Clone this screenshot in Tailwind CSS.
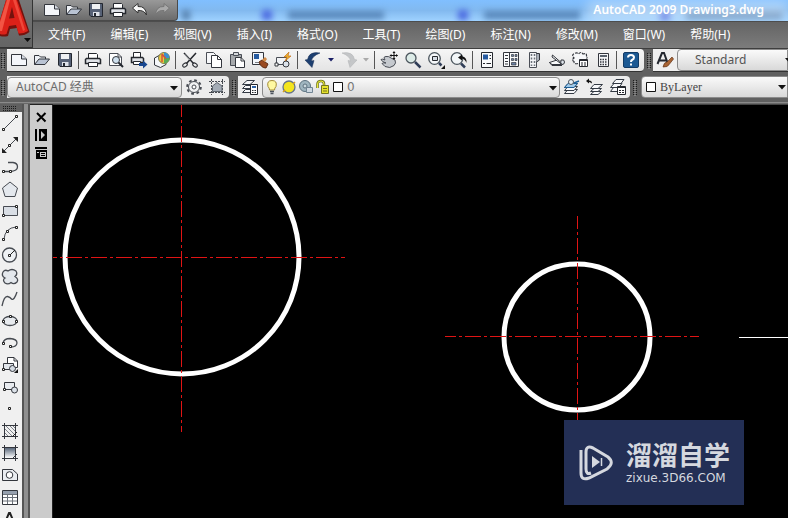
<!DOCTYPE html>
<html lang="zh-CN">
  <head>
    <meta charset="UTF-8" />
    <meta name="viewport" content="width=device-width, initial-scale=1.0" />
    <title>AutoCAD 2009 Drawing3.dwg</title>
    <script src="https://cdn.jsdelivr.net/npm/@tailwindcss/browser@4"></script>
  </head>
  <body class="flex h-screen flex-col overflow-hidden bg-[#686868] font-['Noto_Sans','Noto_Sans_CJK_SC',sans-serif] text-xs">
    <!-- Shared icons -->
    <svg class="hidden">
      <symbol id="i-new" viewBox="0 0 18 18">
        <path d="M1.500 3.500H11.500L16.500 8V14.500H1.500Z" fill="#f4f6fa" stroke="#33363d" />
        <path d="M11.500 3.500V8H16.500" fill="#d5dae2" stroke="#33363d" />
      </symbol>
      <symbol id="i-open" viewBox="0 0 18 18">
        <path d="M1.500 13.500V4.500H6L7.500 6H12.500V8" fill="#eef1f6" stroke="#33363d" />
        <path d="M1.500 13.500L6 8H16.500L12 13.500Z" fill="#b9c3d3" stroke="#33363d" />
      </symbol>
      <symbol id="i-save" viewBox="0 0 18 18">
        <path d="M2.500 2.500H15.500V15.500H4L2.500 14Z" fill="#566176" stroke="#23272f" />
        <path d="M5 3H13V8H5Z" fill="#eef0f3" />
        <path d="M6 11H12.500V15H6Z" fill="#dde1e8" />
        <path d="M7 12H9V15H7Z" fill="#23272f" />
      </symbol>
      <symbol id="i-print" viewBox="0 0 18 18">
        <path d="M4.500 7V2.500H12.500L13.500 3.500V7" fill="#fff" stroke="#25282e" />
        <path d="M2.500 7.500H15.500L16.500 8.500V12.500H1.500V8.500Z" fill="#dfe2e7" stroke="#25282e" stroke-width="1.500" />
        <path d="M4.500 11.500H13.500V15.500H4.500Z" fill="#fff" stroke="#25282e" />
      </symbol>
      <symbol id="i-layers" viewBox="0 0 18 18">
        <g fill="#f7f8fa" stroke="#333a44">
          <path d="M1.500 15.500L5 11.500H14.500L11 15.500Z" />
          <path d="M1.500 12.500L5 8.500H14.500L11 12.500Z" />
          <path d="M1.500 9.500L5 5.500H14.500L11 9.500Z" />
        </g>
      </symbol>
      <symbol id="i-grip" viewBox="0 0 4 16">
        <path d="M.5 0V16M3.500 0V16" stroke="#1d1d1d" stroke-dasharray="1 1" />
        <path d="M2 1V16" stroke="#aaa" stroke-dasharray="1 1" />
      </symbol>
      <symbol id="i-down" viewBox="0 0 10 6"><path d="M0 0H10L5 5.500Z" fill="#111" /></symbol>
    </svg>

    <header class="flex shrink-0">
      <button aria-label="AutoCAD" class="h-12 w-[33px] shrink-0 border-r border-b border-[#343434] bg-gradient-to-b from-[#777] to-[#646464]">
        <svg class="h-[47px] w-8" viewBox="0 0 32 47">
          <path d="M6 0H19L29.500 32Q24 36 19 35.500L17 28L10 29L8 36Q4 37 0 36V20Z" fill="#74120d" />
          <path fill-rule="evenodd" d="M6 0H17L28 31Q23 34 18.500 33.500L16 25L9 26L6.500 34Q3 35 0 34V20ZM12 7L9 18.500L14.500 18Z" fill="#dc2119" />
          <path d="M7 0H10L2 31L0 31V22Z" fill="#f35444" />
          <path d="M13 0H16L25 30L23 31Z" fill="#f0483a" />
          <path d="M24 38H31L27.500 42Z" fill="#0b0b0b" />
        </svg>
      </button>
      <div class="min-w-0 flex-1">
        <!-- Title bar -->
        <div class="flex h-[21px] bg-gradient-to-b from-[#80bfff] via-[#82b9ef] to-[#9fd2ff]">
          <div class="flex w-[145px] shrink-0 items-center gap-1 rounded-br border-r border-b border-[#4a4a4a] bg-gradient-to-b from-[#999] to-[#6b6b6b] pl-2.5">
            <button aria-label="新建"><svg class="size-[18px]"><use href="#i-new" /></svg></button>
            <button aria-label="打开"><svg class="size-[18px]"><use href="#i-open" /></svg></button>
            <button aria-label="保存"><svg class="size-[18px]"><use href="#i-save" /></svg></button>
            <button aria-label="打印"><svg class="size-[18px]"><use href="#i-print" /></svg></button>
            <button aria-label="放弃">
              <svg class="size-[18px]" viewBox="0 0 18 18"><path d="M1.500 7L7 2.500V5.500Q15 5 15.500 14Q13 9 7 9.500V12Z" fill="#f7f7f7" stroke="#333" /></svg>
            </button>
            <button aria-label="重做">
              <svg class="size-[18px]" viewBox="0 0 18 18"><path d="M16.500 7L11 2.500V5.500Q3 5 2.500 14Q5 9 11 9.500V12Z" fill="#a9a9a9" stroke="#777" /></svg>
            </button>
          </div>
          <!-- Blurred windows behind the glass frame -->
          <div class="relative min-w-0 flex-1 overflow-hidden">
            <div class="absolute inset-0 flex items-center blur-[3px]" aria-hidden="true">
              <span class="mt-2 ml-1 h-2.5 w-2 bg-[#557fac]"></span>
              <span class="mt-2 ml-[72px] h-2.5 w-2.5 bg-[#4a68e0]"></span>
              <span class="mt-2 ml-4 h-2 w-24 bg-[#5685b8]"></span>
              <span class="mt-2 ml-[74px] h-2.5 w-2.5 bg-[#4a68e0]"></span>
              <span class="mt-2 ml-4 h-2 w-24 bg-[#5685b8]"></span>
              <span class="mt-2 ml-20 h-2.5 w-2.5 bg-[#4a68e0]"></span>
              <span class="mt-2 ml-4 h-2 w-24 bg-[#5685b8]"></span>
            </div>
            <div class="absolute inset-y-0 right-0 w-[200px] bg-white/35 blur-[6px]"></div>
            <h1 class="relative pr-6 text-right text-xs/5 font-semibold whitespace-nowrap text-white">AutoCAD 2009 Drawing3.dwg</h1>
          </div>
        </div>
        <!-- Menu bar -->
        <nav class="flex h-[27px] items-center gap-[25px] border-t border-[#4d4d4d] bg-gradient-to-b from-[#646464] to-[#7c7c7c] pl-[15px] whitespace-nowrap text-white">
          <button>文件(F)</button>
          <button>编辑(E)</button>
          <button>视图(V)</button>
          <button>插入(I)</button>
          <button>格式(O)</button>
          <button>工具(T)</button>
          <button>绘图(D)</button>
          <button>标注(N)</button>
          <button>修改(M)</button>
          <button>窗口(W)</button>
          <button>帮助(H)</button>
        </nav>
      </div>
    </header>

    <!-- Standard toolbar -->
    <div class="flex h-[27px] shrink-0 items-start border-t border-[#3e3e3e] bg-[#606060]">
      <svg class="mt-1 ml-px h-4 w-1 shrink-0"><use href="#i-grip" /></svg>
      <div class="ml-0.5 flex h-[23px] w-[637px] shrink-0 items-center rounded-r-sm border-b border-[#333] bg-gradient-to-b from-[#f6f6f6] to-[#e4e4e4]">
        <button aria-label="新建" class="grid w-[23px] place-items-center"><svg class="size-[18px]"><use href="#i-new" /></svg></button>
        <button aria-label="打开" class="grid w-[23px] place-items-center"><svg class="size-[18px]"><use href="#i-open" /></svg></button>
        <button aria-label="保存" class="grid w-[23px] place-items-center"><svg class="size-[18px]"><use href="#i-save" /></svg></button>
        <span class="mx-0.5 h-[18px] w-px bg-[#555]"></span>
        <button aria-label="打印" class="grid w-[23px] place-items-center"><svg class="size-[18px]"><use href="#i-print" /></svg></button>
        <button aria-label="打印预览" class="grid w-[23px] place-items-center">
          <svg class="size-[18px]" viewBox="0 0 18 18">
            <path d="M2.500 14.500V2.500H11L14.500 6V14.500Z" fill="#fff" stroke="#4b4f57" />
            <path d="M11 2.500V6H14.500" fill="none" stroke="#4b4f57" />
            <circle cx="9" cy="9" r="3.500" fill="#cfe0ee" stroke="#33363d" />
            <path d="M11.500 11.500L16 16" stroke="#23272f" stroke-width="2" />
          </svg>
        </button>
        <button aria-label="发布" class="grid w-[23px] place-items-center">
          <svg class="size-[18px]" viewBox="0 0 18 18">
            <path d="M3.500 6V1.500H10.500V6" fill="#fff" stroke="#25282e" />
            <path d="M1.500 6.500H12.500L13.500 7.500V11.500H1.500Z" fill="#dfe2e7" stroke="#25282e" stroke-width="1.500" />
            <path d="M3.500 10.500H10.500V13.500H3.500Z" fill="#fff" stroke="#25282e" />
            <path d="M9 12H13V9.500L17.500 13.500L13 17.500V15H9Z" fill="#17468f" />
          </svg>
        </button>
        <button aria-label="3DDWF" class="grid w-[23px] place-items-center">
          <svg class="size-[18px]" viewBox="0 0 18 18">
            <path d="M1.500 7L7 4L13 6.500V13.500L7.500 16.500L1.500 14Z" fill="#f5f7fa" stroke="#33363d" />
            <circle cx="11" cy="7" r="5.500" fill="#e7c93b" stroke="#7d7a52" />
            <path d="M11 1.500A5.500 5.500 0 0 1 16.500 7H11Z" fill="#3b91ce" />
            <path d="M11 7H16.500A5.500 5.500 0 0 1 11 12.500Z" fill="#5aaa57" />
            <path d="M9 3V11M9 3L13 8" stroke="#d3553b" stroke-width="1.500" />
          </svg>
        </button>
        <span class="mx-0.5 h-[18px] w-px bg-[#555]"></span>
        <button aria-label="剪切" class="grid w-6 place-items-center">
          <svg class="size-[18px]" viewBox="0 0 18 18">
            <path d="M3 2L12.500 12.500M15 2L5.500 12.500" stroke="#25282e" stroke-width="1.500" />
            <path d="M3.500 3L9 9" stroke="#fff" stroke-width=".5" />
            <ellipse cx="4" cy="14" rx="2.500" ry="1.700" transform="rotate(-35 4 14)" fill="none" stroke="#25282e" />
            <ellipse cx="14" cy="14" rx="2.500" ry="1.700" transform="rotate(35 14 14)" fill="none" stroke="#25282e" />
          </svg>
        </button>
        <button aria-label="复制" class="grid w-[23px] place-items-center">
          <svg class="size-[18px]" viewBox="0 0 18 18">
            <path d="M1.500 1.500H8.500L10.500 3.500V12.500H1.500Z" fill="#f7f8fa" stroke="#4a4e56" />
            <path d="M6.500 4.500H12.500L16.500 8.500V16.500H6.500Z" fill="#fff" stroke="#33363d" />
            <path d="M12.500 4.500V8.500H16.500" fill="none" stroke="#33363d" />
          </svg>
        </button>
        <button aria-label="粘贴" class="grid w-[23px] place-items-center">
          <svg class="size-[18px]" viewBox="0 0 18 18">
            <path d="M2.500 3.500H13.500V14.500H2.500Z" fill="#a6a9ac" stroke="#4a4e56" />
            <path d="M5.500 1.500H10.500V4.500H5.500Z" fill="#d6d9dc" stroke="#4a4e56" />
            <path d="M7.500 6.500H13L16.500 10V16.500H7.500Z" fill="#fff" stroke="#33363d" />
            <path d="M13 6.500V10H16.500" fill="none" stroke="#33363d" />
          </svg>
        </button>
        <button aria-label="特性匹配" class="grid w-[23px] place-items-center">
          <svg class="size-[18px]" viewBox="0 0 18 18">
            <path d="M1.500 1.500H12.500V13.500H1.500Z" fill="#f3f6fa" stroke="#33363d" />
            <path d="M3 3H8V8H3Z" fill="#255aa0" />
            <path d="M4 11.500H8" stroke="#7a8087" />
            <path d="M8 11L11 9L17 13L15 17Q10 17 8 11Z" fill="#9a4a20" stroke="#5d2c14" />
            <path d="M11 9L14 6L16 8L14 11Z" fill="#d28c4a" />
          </svg>
        </button>
        <button aria-label="块编辑器" class="grid w-[23px] place-items-center">
          <svg class="size-[18px]" viewBox="0 0 18 18">
            <path d="M2.500 6.500H12.500V13.500H2.500Z" fill="#f2f4f7" stroke="#4a4e56" />
            <path d="M1 12H4V15H1Z" fill="#fff" stroke="#33363d" />
            <circle cx="12" cy="13" r="3" fill="#dbe2ea" stroke="#33363d" />
            <path d="M15 1L10 6L13 6L11 10L17 5L14 5Z" fill="#efb32b" stroke="#c1701c" stroke-width=".7" />
          </svg>
        </button>
        <span class="mx-[3px] h-[18px] w-px bg-[#555]"></span>
        <button aria-label="放弃" class="grid w-[23px] place-items-center">
          <svg class="size-[18px]" viewBox="0 0 18 18"><path d="M1 9L8 16.500L10 9.500L7.500 10Q8 5 16 2Q5 0 3.500 8.500Z" fill="#1d3f70" stroke="#142b50" stroke-width=".5" /></svg>
        </button>
        <button aria-label="放弃列表" class="grid w-[13px] place-items-center"><svg class="h-1 w-1.5" viewBox="0 0 6 4"><path d="M0 0H6L3 3.500Z" fill="#1a1f66" /></svg></button>
        <button aria-label="重做" class="grid w-[23px] place-items-center">
          <svg class="size-[18px]" viewBox="0 0 18 18"><path d="M17 9L10 16.500L8 9.500L10.500 10Q10 5 2 2Q13 0 14.500 8.500Z" fill="#c4c6c8" stroke="#afb1b3" stroke-width=".5" /></svg>
        </button>
        <button aria-label="重做列表" class="grid w-3 place-items-center"><svg class="h-1 w-1.5" viewBox="0 0 6 4"><path d="M0 0H6L3 3.500Z" fill="#aaa" /></svg></button>
        <span class="mx-0.5 h-[18px] w-px bg-[#555]"></span>
        <button aria-label="实时平移" class="grid w-6 place-items-center">
          <svg class="size-[18px]" viewBox="0 0 18 18">
            <path d="M1 8.500Q2 7.500 5 9L4 7Q4 5.500 6 5.500Q9 5 11 7L15 9Q16.500 12 14 14.500Q10 18 5 15.500L2 12.500Q3 11.500 6 12Q2 11 1 8.500Z" fill="#c5c9ce" stroke="#4a4e56" />
            <path d="M14 1V8M10.500 4.500H17.500" stroke="#111" />
            <path d="M14 0L12.500 2H15.500ZM14 9L12.500 7H15.500ZM9.500 4.500L11.500 3V6ZM18 4.500L16 3V6Z" fill="#111" />
          </svg>
        </button>
        <button aria-label="实时缩放" class="grid w-[23px] place-items-center">
          <svg class="size-[18px]" viewBox="0 0 18 18">
            <circle cx="7" cy="7" r="5" fill="#dcebe7" stroke="#4c565e" stroke-width="1.300" />
            <path d="M11 11L16.500 16.500" stroke="#2f3d57" stroke-width="2.500" />
          </svg>
        </button>
        <button aria-label="窗口缩放" class="grid w-[23px] place-items-center">
          <svg class="size-[18px]" viewBox="0 0 18 18">
            <circle cx="7.500" cy="7.500" r="5.800" fill="#f5f8fa" stroke="#4c565e" stroke-width="1.300" />
            <path d="M5.500 5.500H10.500V9.500H5.500Z" fill="#d6dde5" stroke="#25282e" />
            <path d="M12 12L14.500 14.500" stroke="#2f3d57" stroke-width="2.500" />
            <path d="M18 14V18H14Z" fill="#111" />
          </svg>
        </button>
        <button aria-label="缩放上一个" class="grid w-[23px] place-items-center">
          <svg class="size-[18px]" viewBox="0 0 18 18">
            <circle cx="7" cy="7.500" r="5.800" fill="#f2f6f8" stroke="#4c565e" stroke-width="1.300" />
            <path d="M11 12.500L15 16.500" stroke="#2f3d57" stroke-width="2.500" />
            <path d="M8 6.500L12 3.500V5.500Q17 6 16.500 12Q15 8 12 7.500V9.500Z" fill="#111" />
          </svg>
        </button>
        <span class="mx-0.5 h-[18px] w-px bg-[#555]"></span>
        <button aria-label="特性" class="grid w-6 place-items-center">
          <svg class="size-[18px]" viewBox="0 0 18 18">
            <path d="M3.500 1.500H14.500V16.500H3.500Z" fill="#fafbfc" stroke="#25282e" />
            <path d="M5 3.500H10V8.500H5Z" fill="#255aa0" />
            <path d="M11.500 4.500H13M11.500 7.500H13M5 12.500H7M8.500 12.500H13" stroke="#25282e" />
          </svg>
        </button>
        <button aria-label="设计中心" class="grid w-[23px] place-items-center">
          <svg class="size-[18px]" viewBox="0 0 18 18">
            <path d="M1.500 1.500H16.500V15.500H1.500ZM7.500 1.500V15.500" fill="#fafbfc" stroke="#33363d" />
            <path d="M3 4.500H6M3 7.500H6M3 10.500H6M3 13H6" stroke="#33363d" />
            <path d="M9.500 3.500H11.500V5.500H9.500ZM13 3.500H15V5.500H13ZM9.500 7.500H11.500V9.500H9.500ZM13 7.500H15V9.500H13ZM9.500 11.500H14V14H9.500Z" fill="#6c83a5" stroke="#33363d" stroke-width=".7" />
          </svg>
        </button>
        <button aria-label="工具选项板" class="grid w-[23px] place-items-center">
          <svg class="size-[18px]" viewBox="0 0 18 18">
            <path d="M4.500 1.500H11.500V16.500H4.500Z" fill="#f5f6f8" stroke="#4a4e56" />
            <path d="M11.500 2.500H14.500V9L11.500 11" fill="#a9afb8" stroke="#33363d" />
            <path d="M6.500 3V15M9.500 3V15" stroke="#6c727a" stroke-width="1.500" stroke-dasharray="2 1.500" />
          </svg>
        </button>
        <button aria-label="图纸集管理器" class="grid w-[23px] place-items-center">
          <svg class="size-[18px]" viewBox="0 0 18 18">
            <path d="M1.500 11.500L9 9L14 13.500H4Z" fill="#f7f8fa" stroke="#33363d" />
            <path d="M4.500 4L13 11.500L14 13.500L4 6Z" fill="#f7f8fa" stroke="#33363d" />
            <path d="M13 9Q16.500 8 16.500 11Q16.500 13.500 14 13.500Q12 12.500 13 9Z" fill="#dfe5ec" stroke="#33363d" />
            <path d="M1.500 11.500L4 14.500H14" fill="none" stroke="#33363d" />
          </svg>
        </button>
        <button aria-label="标记集管理器" class="grid w-[23px] place-items-center">
          <svg class="size-[18px]" viewBox="0 0 18 18">
            <path d="M7 12.500Q3 13.500 3 10.500Q0 9 3 7Q0 4 3.500 2.500Q6 1 7.500 3Q10 0 12 3Q16 1.500 15.500 5Q17 6 15.500 7.500" fill="#f7f8fa" stroke="#33363d" stroke-width="1.200" stroke-dasharray="3 1" />
            <path d="M8.500 8.500H16.500V15.500H8.500Z" fill="#fff" stroke="#25282e" />
            <path d="M8.500 9.500H16.500M10 12H12M13 12H15M10 14H12M13 14H15" stroke="#25282e" />
          </svg>
        </button>
        <button aria-label="快速计算器" class="grid w-[23px] place-items-center">
          <svg class="size-[18px]" viewBox="0 0 18 18">
            <path d="M4.500 2.500H14.500V15.500H4.500Z" fill="#f5f6f8" stroke="#33363d" />
            <path d="M6 5H13" stroke="#59616c" stroke-width="2" />
            <path d="M6 8.500H13M6 11H13M6 13.500H13" stroke="#33363d" stroke-width="1.500" stroke-dasharray="1.500 1" />
          </svg>
        </button>
        <span class="mx-0.5 h-[18px] w-px bg-[#555]"></span>
        <button aria-label="帮助" class="grid w-6 place-items-center">
          <svg class="size-4" viewBox="0 0 16 16">
            <rect x=".5" y=".5" width="15" height="15" rx="1.500" fill="#1c5993" stroke="#123b66" />
            <path d="M5 5.500Q5 3 8 3Q11 3 11 5.500Q11 7 9 8Q8 8.500 8 10" fill="none" stroke="#fff" stroke-width="2" />
            <path d="M7 11.500H9V13.500H7Z" fill="#fff" />
          </svg>
        </button>
      </div>
      <svg class="mt-1 ml-[3px] h-4 w-1 shrink-0"><use href="#i-grip" /></svg>
      <div class="ml-0.5 flex h-[23px] min-w-0 flex-1 items-center border-b border-[#333] bg-[#efefef]">
        <button aria-label="文字样式" class="grid w-6 shrink-0 place-items-center">
          <svg class="size-[18px]" viewBox="0 0 18 18">
            <path d="M1.500 13L6 2H8L12 13M3.500 9.500H10" fill="none" stroke="#23272f" stroke-width="2" />
            <path d="M7 16Q8 11 11 11L16 6L17.500 8L13.500 13Q12 16.500 7 16Z" fill="#a86434" stroke="#63351a" stroke-width=".7" />
          </svg>
        </button>
        <div class="relative h-[22px] min-w-0 flex-1 rounded-l-sm border border-[#8b8b8b] bg-gradient-to-b from-[#fafafa] to-[#d9d9d9]">
          <select aria-label="文字样式" class="size-full appearance-none pl-[17px] text-xs text-[#555]"><option>Standard</option></select>
          <svg class="pointer-events-none absolute top-2 -right-1.5 h-[5px] w-2"><use href="#i-down" /></svg>
        </div>
      </div>
    </div>

    <!-- Workspace and layer toolbars -->
    <div class="flex h-7 shrink-0 items-start border-b border-[#8a8a8a] bg-[#606060] pt-px">
      <svg class="mt-1 ml-px h-4 w-1 shrink-0"><use href="#i-grip" /></svg>
      <div class="ml-0.5 flex h-[22px] w-[222px] shrink-0 items-center rounded-r-sm bg-[#ececec]">
        <div class="relative h-[21px] w-[175px] rounded-sm border border-[#8b8b8b] bg-gradient-to-b from-[#fafafa] to-[#d9d9d9]">
          <select aria-label="工作空间" class="size-full appearance-none pl-2 text-xs text-[#6c6c6c]"><option>AutoCAD 经典</option></select>
          <svg class="pointer-events-none absolute top-2 right-[3px] h-[5px] w-2"><use href="#i-down" /></svg>
        </div>
        <button aria-label="工作空间设置" class="grid w-[23px] place-items-center">
          <svg class="size-[18px]" viewBox="0 0 18 18">
            <circle cx="9" cy="9" r="6.800" fill="none" stroke="#474b52" stroke-width="2" stroke-dasharray="2.700 2.640" />
            <circle cx="9" cy="9" r="5.500" fill="#f0f1f2" stroke="#474b52" />
            <circle cx="9" cy="9" r="2" fill="#fff" stroke="#474b52" />
          </svg>
        </button>
        <button aria-label="我的工作空间" class="grid w-[23px] place-items-center">
          <svg class="size-[18px]" viewBox="0 0 18 18">
            <path d="M3.500 1V17M14.500 1V17M1 3.500H17M1 14.500H17" stroke="#474b52" stroke-dasharray="2 1" />
            <path d="M4.500 13.500V8L9 4.500L14 8V13.500Z" fill="#a4acb6" stroke="#5f666f" />
          </svg>
        </button>
      </div>
      <svg class="mt-1 ml-[3px] h-4 w-1 shrink-0"><use href="#i-grip" /></svg>
      <div class="ml-0.5 flex h-[22px] w-[392px] shrink-0 items-center rounded-r-sm bg-[#ececec]">
        <button aria-label="图层特性" class="grid w-6 shrink-0 place-items-center">
          <svg class="size-[18px]" viewBox="0 0 18 18">
            <g fill="#f7f8fa" stroke="#333a44">
              <path d="M1.500 14.500L4.500 11.500H11V14.500Z" />
              <path d="M1.500 10.500L4.500 7.500H12L9 10.500Z" />
              <path d="M1.500 6.500L6 2.500H13.500L9 6.500Z" />
            </g>
            <path d="M9.500 6.500H16.500V16.500H9.500Z" fill="#fff" stroke="#25282e" />
            <path d="M11 9H15" stroke="#2b62a5" stroke-width="2" />
            <path d="M11 12.500H15M11 14.500H15" stroke="#25282e" stroke-dasharray="1 .5" />
          </svg>
        </button>
        <div class="relative flex h-[21px] min-w-0 flex-1 items-center rounded-sm border border-[#8b8b8b] bg-gradient-to-b from-[#fafafa] to-[#d9d9d9] pl-px">
          <svg class="h-4 w-[17px] shrink-0" viewBox="0 0 17 16">
            <path d="M5.500 11Q5.500 9 4 7.500Q2.500 1.500 8 1.500Q13.500 1.500 12 7.500Q10.500 9 10.500 11Z" fill="#fff9a2" stroke="#a58d38" />
            <path d="M6 12.500H10M6.500 14.500H9.500" stroke="#4c535c" stroke-width="1.500" />
          </svg>
          <svg class="h-4 w-[17px] shrink-0" viewBox="0 0 17 16">
            <circle cx="8" cy="8" r="6" fill="#f3e51f" stroke="#66758a" stroke-width="1.300" />
            <path d="M2 13L4 11M14 3L12 5" stroke="#d6a21d" stroke-width="1.500" />
          </svg>
          <svg class="h-4 w-[17px] shrink-0" viewBox="0 0 17 16">
            <circle cx="7" cy="7" r="5.500" fill="#9fb5bf" stroke="#5d7280" />
            <circle cx="7" cy="7" r="2" fill="#ccd9df" stroke="#5d7280" />
            <path d="M8.500 8.500H14.500V13.500H8.500Z" fill="#ced8e1" stroke="#718493" />
          </svg>
          <svg class="h-4 w-[17px] shrink-0" viewBox="0 0 17 16">
            <path d="M2.500 9V5Q2.500 2 6 2Q9 2 9 5V7" fill="none" stroke="#757922" stroke-width="2.600" />
            <path d="M2.500 9V5Q2.500 2 6 2Q9 2 9 5V7" fill="none" stroke="#ecec37" />
            <path d="M6.500 6.500H13.500V14.500H6.500Z" fill="#e6e22b" stroke="#727320" />
            <path d="M8 9.500H12M8 12H12" stroke="#727320" />
          </svg>
          <svg class="size-3 shrink-0" viewBox="0 0 12 12"><path d="M1.500 1.500H10.500V10.500H1.500Z" fill="#fff" stroke="#111" /></svg>
          <select aria-label="图层" class="h-full min-w-0 flex-1 appearance-none pl-[3px] font-['DejaVu_Sans',sans-serif] text-xs text-[#777]"><option>0</option></select>
          <svg class="pointer-events-none absolute top-2 right-0.5 h-[5px] w-2"><use href="#i-down" /></svg>
        </div>
        <button aria-label="置为当前" class="grid w-[23px] shrink-0 place-items-center">
          <svg class="size-[18px]" viewBox="0 0 18 18">
            <use href="#i-layers" />
            <path d="M1.500 9.500L5 5.500H14.500L11 9.500Z" fill="#9fc8e8" stroke="#1d5f96" />
            <circle cx="8" cy="4" r="2.500" fill="#e8f1f8" stroke="#4c565e" />
            <path d="M11 5L16 3" stroke="#1d5f96" stroke-width="1.500" />
          </svg>
        </button>
        <button aria-label="上一个图层" class="grid w-[23px] shrink-0 place-items-center">
          <svg class="size-[18px]" viewBox="0 0 18 18">
            <g fill="#f7f8fa" stroke="#333a44">
              <path d="M4.500 16.500L8 13.500H15.500L12 16.500Z" />
              <path d="M4.500 13.500L8 10.500H15.500L12 13.500Z" />
              <path d="M4.500 10.500L8 6.500H16.500L12 10.500Z" />
            </g>
            <path d="M0 3L3 .5V2.500Q6 2.500 6 5.500Q4.500 4 3 4V5.500Z" fill="#111" />
          </svg>
        </button>
        <button aria-label="图层状态管理器" class="grid w-6 shrink-0 place-items-center">
          <svg class="size-[18px]" viewBox="0 0 18 18">
            <g fill="#f7f8fa" stroke="#333a44">
              <path d="M1.500 13.500L4.500 9.500H11L9 13.500Z" />
              <path d="M1.500 9.500L5 5.500H13L10 9.500Z" />
              <path d="M3.500 5.500L7 1.500H15L12 5.500Z" />
            </g>
            <path d="M8.500 8.500H16.500V16.500H8.500Z" fill="#fff" stroke="#25282e" />
            <path d="M8.500 9.500H16.500M10 12.500H12M13 12.500H15M10 14.500H12M13 14.500H15" stroke="#25282e" />
          </svg>
        </button>
      </div>
      <svg class="mt-1 ml-[3px] h-4 w-1 shrink-0"><use href="#i-grip" /></svg>
      <div class="relative ml-1 flex h-[22px] min-w-0 flex-1 items-center rounded-l-sm border border-[#8b8b8b] bg-gradient-to-b from-[#fafafa] to-[#d9d9d9] pl-[3px]">
        <svg class="size-3 shrink-0" viewBox="0 0 12 12"><path d="M1.500 1.500H10.500V10.500H1.500Z" fill="#fff" stroke="#111" /></svg>
        <select aria-label="颜色" class="h-full min-w-0 flex-1 appearance-none pl-[3px] font-['Liberation_Serif',serif] text-xs text-[#444]"><option>ByLayer</option></select>
        <svg class="pointer-events-none absolute top-2 right-px h-[5px] w-2"><use href="#i-down" /></svg>
      </div>
    </div>

    <main class="flex min-h-0 flex-1 pt-px">
      <!-- Draw toolbar -->
      <aside class="flex w-[22px] shrink-0 flex-col overflow-hidden bg-[#f0f0f0]">
        <div class="h-2 shrink-0 bg-[#606060] pt-px">
          <svg class="mx-auto h-[7px] w-4" viewBox="0 0 16 7"><path d="M0 1.500H14M0 3.500H14M0 5.500H14" stroke="#1d1d1d" stroke-dasharray="1 1" /></svg>
        </div>
        <button aria-label="直线" class="shrink-0">
          <svg class="size-[22px]" viewBox="0 0 22 22"><path d="M4 17L16 5" stroke="#474b52" /><path d="M2.500 16.500H4.500V18.500H2.500ZM15.500 3.500H17.500V5.500H15.500Z" fill="#fff" stroke="#222" /></svg>
        </button>
        <button aria-label="构造线" class="shrink-0">
          <svg class="size-[22px]" viewBox="0 0 22 22"><path d="M4 17L16 5" stroke="#474b52" /><path d="M2 19V14L7 19ZM18 3V8L13 3Z" fill="#222" /><path d="M8.500 10.500H10.500V12.500H8.500Z" fill="#fff" stroke="#222" /></svg>
        </button>
        <button aria-label="多段线" class="shrink-0">
          <svg class="size-[22px]" viewBox="0 0 22 22"><path d="M8 6.500H13Q17.500 7 17.500 11Q17.500 15 10 15.500H3.500" fill="none" stroke="#474b52" stroke-width="1.300" /><path d="M2.500 14.500H4.500V16.500H2.500ZM9.500 14.500H11.500V16.500H9.500Z" fill="#fff" stroke="#222" /></svg>
        </button>
        <button aria-label="正多边形" class="shrink-0">
          <svg class="size-[22px]" viewBox="0 0 22 22"><path d="M10 4L17.500 10L15 18.500H5L2.500 10Z" fill="#e4e8ed" stroke="#474b52" /></svg>
        </button>
        <button aria-label="矩形" class="shrink-0">
          <svg class="size-[22px]" viewBox="0 0 22 22"><path d="M3.500 6.500H17.500V15.500H3.500Z" fill="#d9dee5" stroke="#474b52" /><path d="M2.500 14.500H4.500V16.500H2.500ZM15.500 5.500H17.500V7.500H15.500Z" fill="#fff" stroke="#222" /></svg>
        </button>
        <button aria-label="圆弧" class="shrink-0">
          <svg class="size-[22px]" viewBox="0 0 22 22"><path d="M4 17Q5 6 16 5" fill="none" stroke="#474b52" /><path d="M2.500 16.500H4.500V18.500H2.500ZM6.500 8.500H8.500V10.500H6.500ZM15.500 4.500H17.500V6.500H15.500Z" fill="#fff" stroke="#222" /></svg>
        </button>
        <button aria-label="圆" class="shrink-0">
          <svg class="size-[22px]" viewBox="0 0 22 22"><circle cx="9.500" cy="11" r="7" fill="#eef1f4" stroke="#474b52" stroke-width="1.300" /><path d="M10 11L15 6" stroke="#222" /><path d="M8.500 10.500H10.500V12.500H8.500Z" fill="#fff" stroke="#222" /></svg>
        </button>
        <button aria-label="修订云线" class="shrink-0">
          <svg class="size-[22px]" viewBox="0 0 22 22"><path d="M8 5Q12 2 16 5Q18 8 15 10.500Q19 13 17 16Q14 19 11 16.500Q8 19 5 17Q2 14 5 12Q1 10 3 6Q5 3 8 5Z" fill="#e3e7ec" stroke="#474b52" stroke-width="1.300" /></svg>
        </button>
        <button aria-label="样条曲线" class="shrink-0">
          <svg class="size-[22px]" viewBox="0 0 22 22"><path d="M2 18Q4 8 7.500 8.500Q10 9 11.500 11Q14 13 17 4" fill="none" stroke="#474b52" stroke-width="1.300" /></svg>
        </button>
        <button aria-label="椭圆" class="shrink-0">
          <svg class="size-[22px]" viewBox="0 0 22 22"><ellipse cx="10" cy="11" rx="7" ry="4.500" fill="#e8ebef" stroke="#474b52" stroke-width="1.300" /><path d="M2.500 10.500H4.500V12.500H2.500ZM9.500 5.500H11.500V7.500H9.500ZM15.500 10.500H17.500V12.500H15.500Z" fill="#fff" stroke="#222" /></svg>
        </button>
        <button aria-label="椭圆弧" class="shrink-0">
          <svg class="size-[22px]" viewBox="0 0 22 22"><path d="M3 11Q4 6.500 10 6.500Q17 7 17 11Q16.500 15 11 15" fill="none" stroke="#474b52" stroke-width="1.300" /><path d="M2.500 10.500H4.500V12.500H2.500ZM9.500 13.500H11.500V15.500H9.500Z" fill="#fff" stroke="#222" /></svg>
        </button>
        <button aria-label="插入块" class="shrink-0">
          <svg class="size-[22px]" viewBox="0 0 22 22"><path d="M7.500 10V3.500H14L17.500 7V13.500H12" fill="#fff" stroke="#33363d" /><path d="M14 3.500V7H17.500" fill="none" stroke="#33363d" /><path d="M3.500 9.500H13.500V15.500H3.500Z" fill="#e1e5ea" stroke="#33363d" /><circle cx="12.500" cy="14.500" r="3" fill="#d5dce4" stroke="#33363d" /><path d="M2.500 14.500H4.500V16.500H2.500Z" fill="#fff" stroke="#222" /><path d="M18 15V19H14Z" fill="#111" /></svg>
        </button>
        <button aria-label="创建块" class="shrink-0">
          <svg class="size-[22px]" viewBox="0 0 22 22"><path d="M4.500 6.500H14.500V13.500H4.500Z" fill="#e8ebef" stroke="#33363d" /><circle cx="14.500" cy="14" r="3" fill="#dce2e9" stroke="#33363d" /><path d="M3.500 12.500H5.500V14.500H3.500Z" fill="#fff" stroke="#222" /></svg>
        </button>
        <button aria-label="点" class="shrink-0">
          <svg class="size-[22px]" viewBox="0 0 22 22"><path d="M8.500 9.500H10.500V11.500H8.500Z" fill="#fff" stroke="#222" /></svg>
        </button>
        <button aria-label="图案填充" class="shrink-0">
          <svg class="size-[22px]" viewBox="0 0 22 22"><path d="M4.500 3V19M15.500 3V19M2 5.500H18M2 16.500H18" stroke="#33363d" /><path d="M5 13L8 16M5 9L12 16M6 6L15 15M10 6L15 11M13 6L15 8" stroke="#7b8189" /><path d="M12 17L17 12" stroke="#222" /></svg>
        </button>
        <button aria-label="渐变色" class="shrink-0">
          <svg class="size-[22px]" viewBox="0 0 22 22">
            <defs><linearGradient id="fade" x2="0" y2="1"><stop stop-color="#59677a" /><stop offset="1" stop-color="#fff" /></linearGradient></defs>
            <path d="M5 6H15V16H5Z" fill="url(#fade)" /><path d="M4.500 3V19M15.500 3V19M2 5.500H18M2 16.500H18M12 17L17 12" stroke="#33363d" />
          </svg>
        </button>
        <button aria-label="面域" class="shrink-0">
          <svg class="size-[22px]" viewBox="0 0 22 22"><path d="M2.500 5.500H12.500L17.500 10V16.500H2.500Z" fill="#e9ecf0" stroke="#33363d" /><circle cx="9.500" cy="11" r="3.300" fill="#fff" stroke="#33363d" /></svg>
        </button>
        <button aria-label="表格" class="shrink-0">
          <svg class="size-[22px]" viewBox="0 0 22 22"><path d="M2.500 4.500H17.500V18.500H2.500Z" fill="#fff" stroke="#33363d" /><path d="M3 5H17V8H3Z" fill="#96a0ae" /><path d="M3 8.500H17M3 11.500H17M3 15H17M7.500 8V18M12.500 8V18" stroke="#6c727a" /></svg>
        </button>
        <button aria-label="多行文字" class="shrink-0">
          <svg class="size-[22px]" viewBox="0 0 22 22"><path d="M4 17L9 5H10L15 17M6 13H13" fill="none" stroke="#222" stroke-width="2" /></svg>
        </button>
      </aside>
      <div class="w-2 shrink-0 border-x-2 border-[#555] bg-[#8f8f8f]"></div>

      <!-- Collapsed palette -->
      <aside class="flex w-[23px] shrink-0 flex-col items-center gap-1.5 border-t border-r border-[#222] bg-[#cbcbcb] pt-1.5">
        <button aria-label="关闭"><svg class="block size-3" viewBox="0 0 12 12"><path d="M2 2L10.500 10.500M10.500 2L2 10.500" stroke="#000" stroke-width="2" /></svg></button>
        <button aria-label="自动隐藏"><svg class="block size-3" viewBox="0 0 12 12"><path d="M0 0H2V12H0ZM4 0H12V12H4Z" fill="#000" /><path d="M6 2L10 6L6 10Z" fill="#cbcbcb" /></svg></button>
        <button aria-label="特性"><svg class="block size-3" viewBox="0 0 12 12"><path d="M0 0H12V2H0ZM1 3H12V12H1Z" fill="#000" /><path d="M1 2H12V3H1ZM2 5H4V6H2ZM5 5H11V10H5Z" fill="#cbcbcb" /><path d="M6 6H10V7H6ZM6 8H10V9H6Z" fill="#000" /></svg></button>
      </aside>

      <!-- Drawing area -->
      <section class="relative min-w-0 flex-1 overflow-hidden border-t border-[#444] bg-black">
        <svg class="block size-full" fill="none" role="img" aria-label="Drawing3">
          <circle cx="129" cy="152" r="117" stroke="#fff" stroke-width="5" />
          <circle cx="524" cy="232" r="73" stroke="#fff" stroke-width="5" />
          <path d="M686 232.500H2000" stroke="#fff" />
          <path d="M0 152.500H292" stroke="#e01414" stroke-dasharray="16 3 3 3" stroke-dashoffset="12" />
          <path d="M128.500 0V327" stroke="#e01414" stroke-dasharray="16 3 3 3" stroke-dashoffset="4" />
          <path d="M392 231.500H646" stroke="#e01414" stroke-dasharray="16 3 3 3" stroke-dashoffset="5" />
          <path d="M524.500 111V330" stroke="#e01414" stroke-dasharray="16 3 3 3" stroke-dashoffset="3" />
        </svg>
        <div class="absolute right-11 bottom-[13px] flex h-[85px] w-[180px] items-center gap-3 bg-[#232f55] pl-3.5 text-[#d5d8df]">
          <svg class="h-9 w-9 shrink-0" viewBox="0 0 36 36" fill="none" stroke="currentColor">
            <path d="M3 5V28Q3 36 11 33L29 24Q37 18 30 12L15 3Q8 0 8 7V24Q8 30 13 28" stroke-width="3" />
            <path d="M14 11L22 17L14 23Z" fill="currentColor" stroke="none" />
            <path d="M23.500 13V21" stroke-width="1.500" />
          </svg>
          <div class="whitespace-nowrap">
            <p class="font-['Noto_Sans_CJK_SC',sans-serif] text-[26px]/7 font-bold">溜溜自学</p>
            <p class="pt-0.5 font-['DejaVu_Sans',sans-serif] text-xs/4">zixue.3D66.COM</p>
          </div>
        </div>
      </section>
    </main>
  </body>
</html>
